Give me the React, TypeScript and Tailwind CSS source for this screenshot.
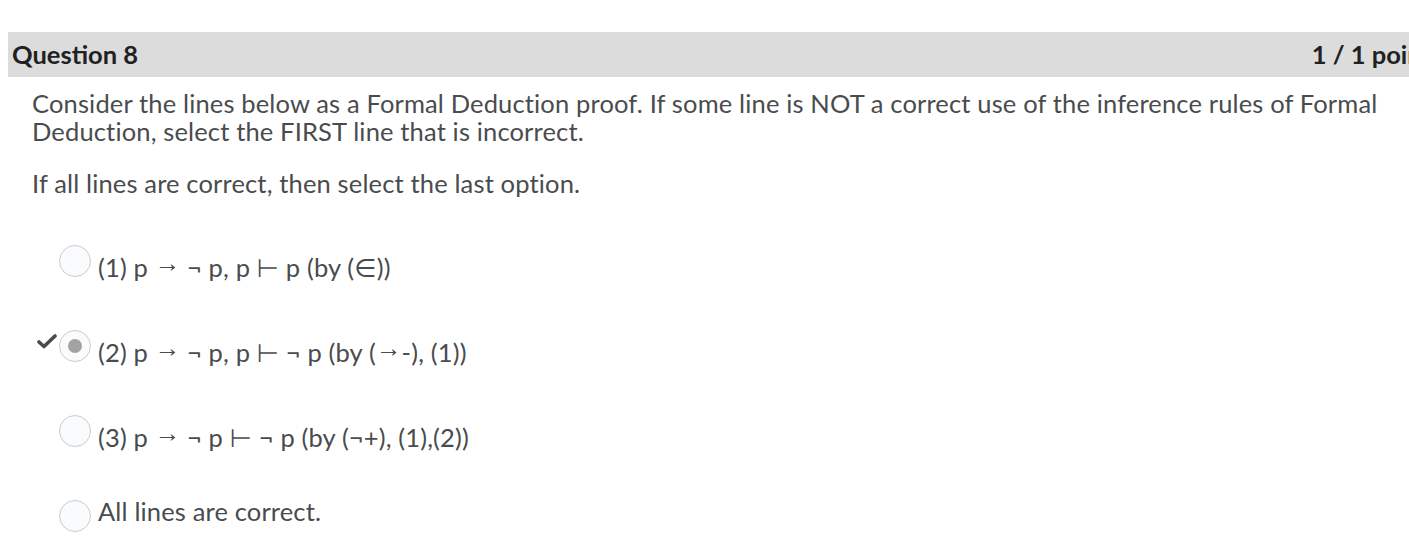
import React from 'react';

const Radio: React.FC<{ checked?: boolean }> = ({ checked }) => (
  <span className="flex h-[32px] w-[32px] shrink-0 items-center justify-center rounded-full border border-[#c9cdd1] bg-[#f9fbfd]">
    {checked && <span className="h-[14px] w-[14px] rounded-full bg-[#a3a3a3]" />}
  </span>
);

const Check: React.FC = () => (
  <svg width="20" height="15" viewBox="0 0 20 15" className="mt-[4px] ml-[5px]">
    <path d="M2 8 L7 12.5 L18 2" fill="none" stroke="#494c4e" strokeWidth="3.6" strokeLinecap="round" strokeLinejoin="round" />
  </svg>
);

// arrow drawn in a narrower font, lifted to mid-height as in the reference
const Arr: React.FC = () => (
  <span className="align-[0.2em] leading-[0px]" style={{ fontFamily: '"Liberation Sans", "DejaVu Sans", sans-serif' }}>→</span>
);

const options = [
  { parts: ['(1) p ', ' ¬ p, p ⊢ p (by (∈))'] },
  { parts: ['(2) p ', ' ¬ p, p ⊢ ¬ p (by (', '-), (1))'], checked: true },
  { parts: ['(3) p ', ' ¬ p ⊢ ¬ p (by (¬+), (1),(2))'] },
];

export default function App() {
  return (
    <div className="h-[555px] w-[1409px] overflow-hidden bg-white text-[#494c4e]" style={{ fontFamily: 'Lato, "DejaVu Sans", sans-serif' }}>
      {/* Header */}
      <div className="ml-[8px] mt-[32px] flex h-[45px] w-[1435px] items-center justify-between bg-[#dcdcdc] pl-[4px] pr-[12px] text-[25.5px] font-bold text-[#202122]">
        <span>Question 8</span>
        <span>1 / 1 point</span>
      </div>

      <div className="pl-[32px] pr-[10px] text-[25.5px] leading-[28px] tracking-[0.15px]">
        <p className="mt-[12px]">
          Consider the lines below as a Formal Deduction proof. If some line is NOT a correct use of the inference rules of Formal Deduction, select the FIRST line that is incorrect.
        </p>
        <p className="mt-[24px]">If all lines are correct, then select the last option.</p>

        {/* Options */}
        <div className="mt-[48px]">
          {options.map((o, i) => (
            <div key={i} className="flex h-[85px] items-start">
              <div className="w-[27px] shrink-0">{o.checked && <Check />}</div>
              <Radio checked={o.checked} />
              <span className="ml-[7px] mt-[8px]">
                {o.parts.map((p, j) => (
                  <React.Fragment key={j}>
                    {j > 0 && <Arr />}
                    {p}
                  </React.Fragment>
                ))}
              </span>
            </div>
          ))}
          <div className="flex items-start">
            <div className="w-[27px] shrink-0" />
            <Radio />
            <span className="ml-[7px] mt-[-3px]">All lines are correct.</span>
          </div>
        </div>
      </div>
    </div>
  );
}
